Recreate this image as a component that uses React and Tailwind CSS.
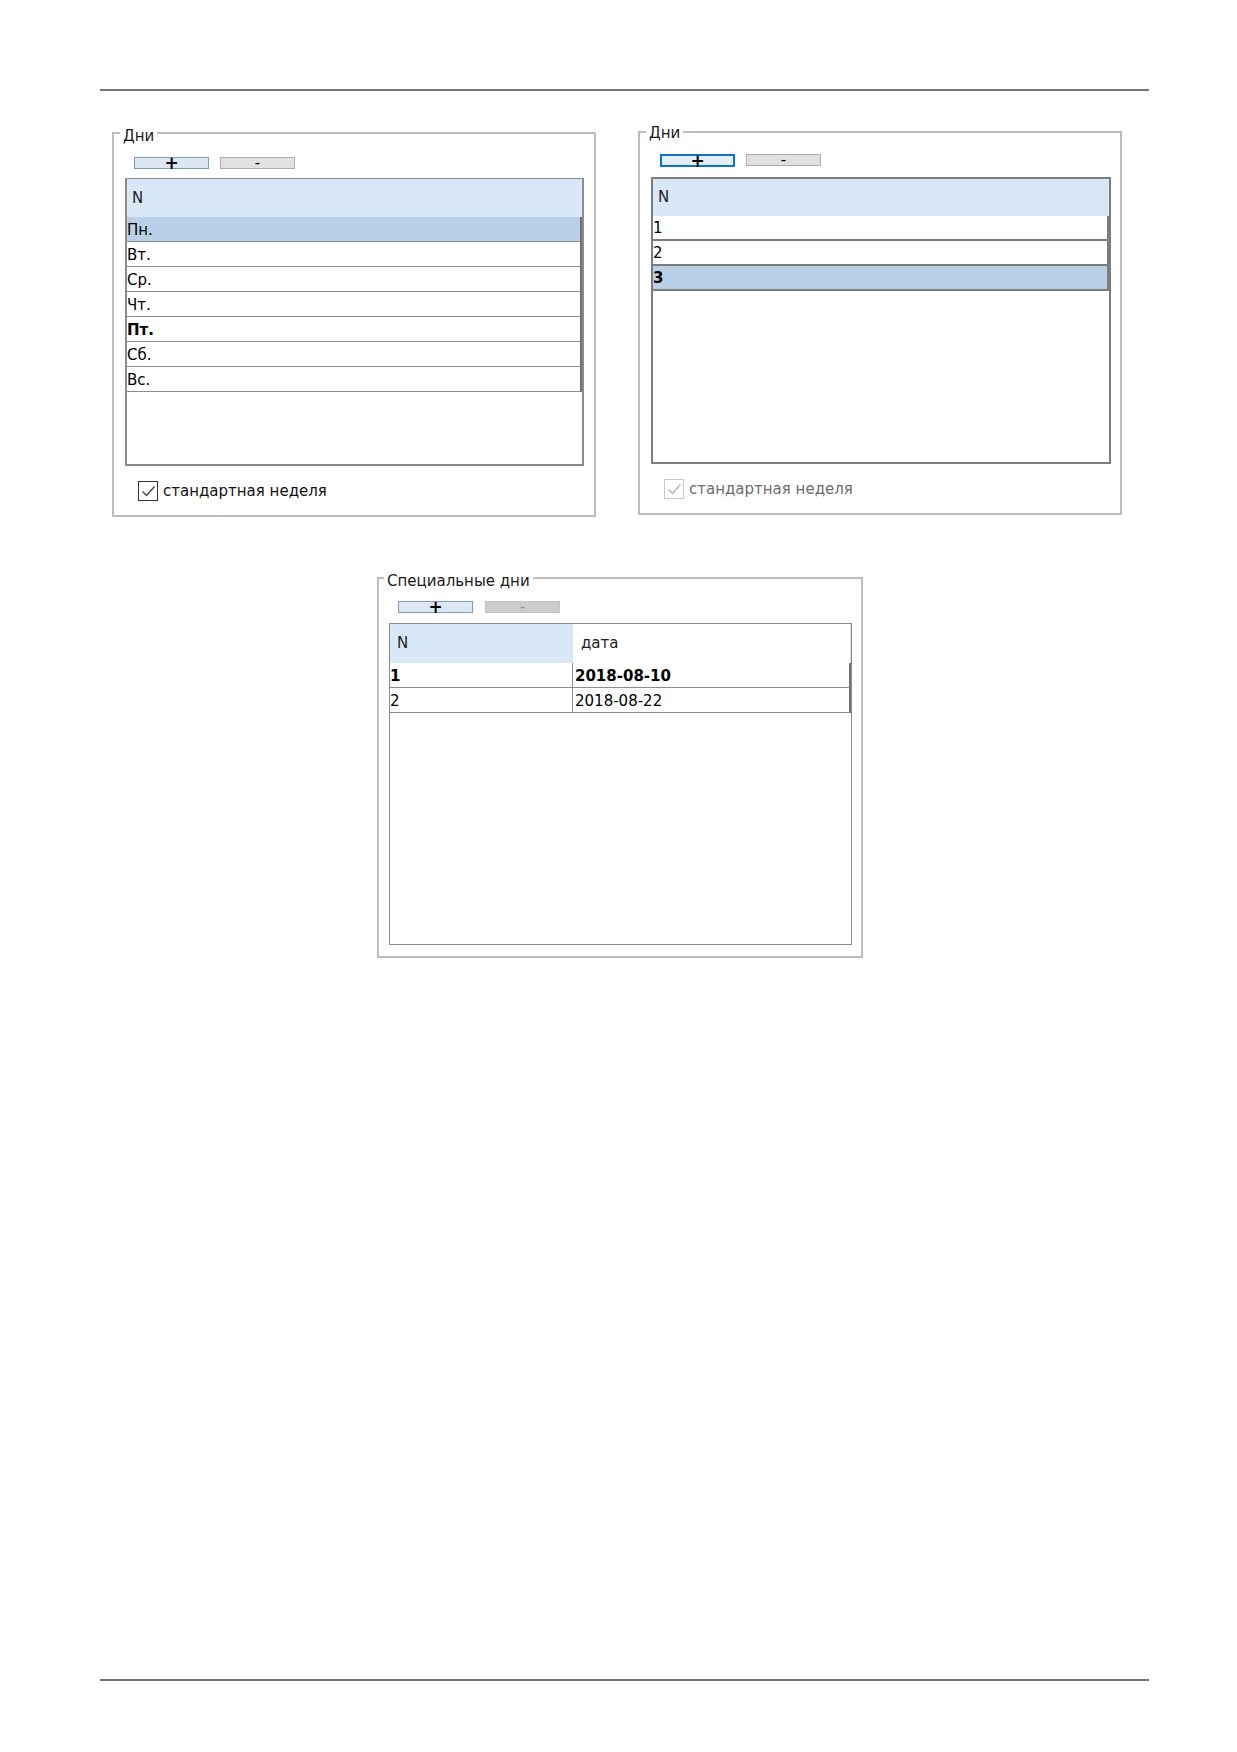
import React from "react";

const weekDays = [
  { n: "Пн.", selected: true },
  { n: "Вт." },
  { n: "Ср." },
  { n: "Чт." },
  { n: "Пт.", bold: true },
  { n: "Сб." },
  { n: "Вс." },
];

const dayNumbers = [{ n: "1" }, { n: "2" }, { n: "3", selected: true, bold: true }];

const specialDays = [
  { n: "1", date: "2018-08-10", bold: true },
  { n: "2", date: "2018-08-22" },
];

function GroupBox({ title, className, titleClass = "top-[3px]", children }) {
  return (
    <fieldset className={`border-2 border-[#bdbdbd] ${className}`}>
      <legend className="-ml-[5px] px-[3px] leading-[18px] text-[#1a1a1a]">
        <span className={`relative ${titleClass}`}>{title}</span>
      </legend>
      {children}
    </fieldset>
  );
}

function ToolButton({ kind }) {
  const look = {
    add: "h-[12px] border border-[#7f9cbb] bg-[#dce7f3] text-black",
    focused: "h-[13px] border-2 border-[#0a74d0] bg-[#e4eef9] text-black",
    remove: "h-[12px] border border-[#adadad] bg-[#e1e1e1] text-black",
    disabled: "h-[12px] border border-[#c4c4c4] bg-[#cccccc] text-[#8f8f8f]",
  }[kind];
  const plus = kind === "add" || kind === "focused";
  return (
    <button className={`flex w-[75px] items-center justify-center overflow-visible ${look}`}>
      {plus ? (
        <span className="text-[17px] font-bold leading-[12px]">+</span>
      ) : (
        <span className="text-[15px] leading-[12px]">-</span>
      )}
    </button>
  );
}

function CheckBox({ label, disabled }) {
  return (
    <label
      className={`flex items-center gap-[5px] leading-[20px] ${disabled ? "text-[#6d6d6d]" : "text-[#111111]"}`}
    >
      <span
        className={`flex h-[20px] w-[20px] items-center justify-center border bg-white ${
          disabled ? "border-[#c8c8c8]" : "border-[#333333]"
        }`}
      >
        <svg viewBox="0 0 18 18" className="h-[18px] w-[18px]">
          <polyline
            points="3.5,9.5 7.5,13.5 15.5,4.5"
            fill="none"
            stroke={disabled ? "#b5b5b5" : "#444444"}
            strokeWidth="1.4"
          />
        </svg>
      </span>
      {label}
    </label>
  );
}

function WeekTable() {
  return (
    <div className="h-[288px] w-[459px] border-x-2 border-b-2 border-t border-[#8c8c8c] bg-white">
      <div className="flex h-[38px] items-center bg-[#d9e8f7] pl-[5px] text-[#1e1e1e]">N</div>
      {weekDays.map((d) => (
        <div
          key={d.n}
          className={`flex h-[25px] items-center border-b border-r-2 border-b-[#8c8c8c] border-r-[#707070] pt-[2px] ${
            d.selected ? "bg-[#b9d0e6]" : ""
          } ${d.bold ? "font-bold" : ""}`}
        >
          {d.n}
        </div>
      ))}
    </div>
  );
}

function NumberTable() {
  return (
    <div className="h-[287px] w-[460px] border-2 border-[#7d7d7d] bg-white">
      <div className="flex h-[37px] items-center bg-[#d9e8f7] pl-[5px] text-[#1e1e1e]">N</div>
      {dayNumbers.map((d) => (
        <div
          key={d.n}
          className={`flex h-[25px] items-center border-b-2 border-r-2 border-[#7b7b7b] pt-[2px] ${
            d.selected ? "bg-[#b9d0e6]" : ""
          } ${d.bold ? "font-bold" : ""}`}
        >
          {d.n}
        </div>
      ))}
    </div>
  );
}

function SpecialTable() {
  return (
    <div className="h-[322px] w-[463px] border border-[#8c8c8c] bg-white">
      <div className="flex h-[39px]">
        <div className="flex w-[183px] items-center bg-[#d9e8f7] pl-[7px] text-[#1e1e1e]">N</div>
        <div className="flex flex-1 items-center border-r border-[#dcdcdc] pl-[8px] text-[#1e1e1e]">дата</div>
      </div>
      {specialDays.map((d) => (
        <div
          key={d.n}
          className={`flex h-[25px] border-b border-r-2 border-b-[#8c8c8c] border-r-[#707070] ${d.bold ? "font-bold" : ""}`}
        >
          <div className="flex w-[183px] items-center border-r border-[#8c8c8c] pt-[2px]">{d.n}</div>
          <div className="flex flex-1 items-center pl-[2px] pt-[2px]">{d.date}</div>
        </div>
      ))}
    </div>
  );
}

export default function App() {
  return (
    <div className="min-h-[1752px] w-full bg-white font-['DejaVu_Sans',sans-serif] text-[15px] text-black">
      <div className="pl-[100px] pr-[88px] pt-[89px]">
        <div className="h-[2px] bg-[#737373]" />

        <div className="ml-[12px] mt-[32px] flex items-start gap-[42px]">
          <GroupBox title="Дни" className="mt-[1px] w-[484px] pb-[14px] pl-[11px] pr-[10px]">
            <div className="ml-[9px] mt-[15px] flex items-start gap-[11px]">
              <ToolButton kind="add" />
              <ToolButton kind="remove" />
            </div>
            <div className="mt-[9px]">
              <WeekTable />
            </div>
            <div className="ml-[13px] mt-[15px]">
              <CheckBox label="стандартная неделя" />
            </div>
          </GroupBox>

          <GroupBox title="Дни" titleClass="top-[1px]" className="w-[484px] pb-[14px] pl-[11px] pr-[9px]">
            <div className="ml-[9px] mt-[13px] flex items-start gap-[11px]">
              <ToolButton kind="focused" />
              <ToolButton kind="remove" />
            </div>
            <div className="mt-[10px]">
              <NumberTable />
            </div>
            <div className="ml-[13px] mt-[15px]">
              <CheckBox label="стандартная неделя" disabled />
            </div>
          </GroupBox>
        </div>

        <div className="ml-[277px] mt-[52px] flex">
          <GroupBox title="Специальные дни" className="w-[486px] pb-[11px] pl-[10px] pr-[9px]">
            <div className="ml-[9px] mt-[14px] flex items-start gap-[12px]">
              <ToolButton kind="add" />
              <ToolButton kind="disabled" />
            </div>
            <div className="mt-[10px]">
              <SpecialTable />
            </div>
          </GroupBox>
        </div>

        <div className="mt-[721px] h-[2px] bg-[#737373]" />
      </div>
    </div>
  );
}
